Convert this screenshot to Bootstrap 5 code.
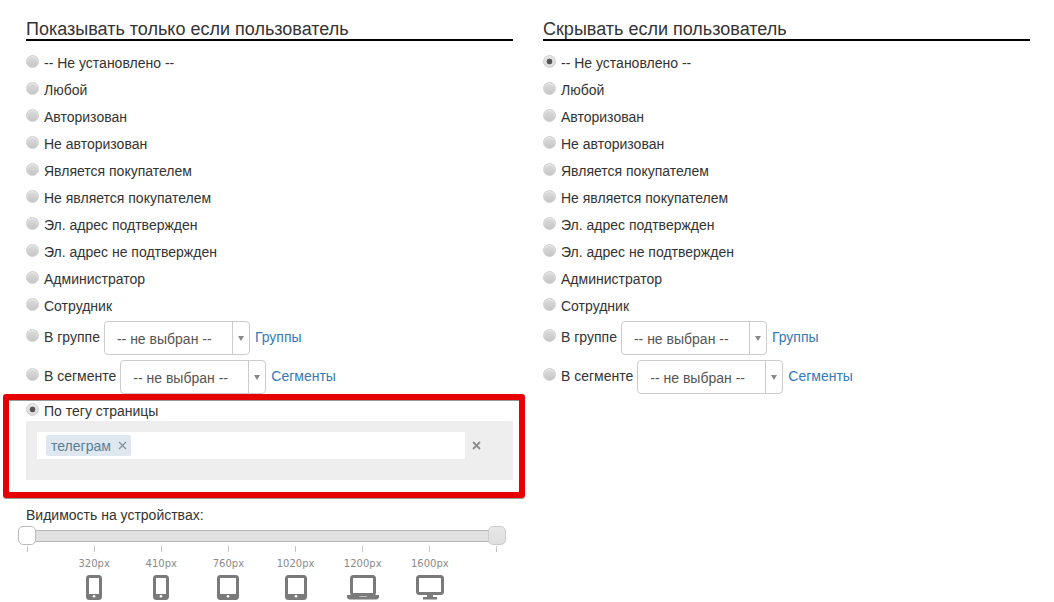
<!DOCTYPE html>
<html lang="ru"><head><meta charset="utf-8"><title>Видимость</title>
<link href="https://cdn.jsdelivr.net/npm/bootstrap@5.3.0/dist/css/bootstrap.min.css" rel="stylesheet">
<style>
html,body{height:602px;overflow:hidden}
body{font-family:"Liberation Sans",Arial,sans-serif;font-size:14px;color:#333;background:#fff;position:relative}
.page-wrap{padding:17px 24px 0 26px;gap:30px}
.pane{width:487px;flex:none}
.pane-title{font-size:18px;font-weight:400;line-height:22px;margin:0 0 7px;padding-top:1px;border-bottom:2px solid #000;color:#333;height:24px}
.opt{height:27px;display:flex;align-items:flex-start;padding-top:7px;line-height:16px;margin:0}
.rb{appearance:none;-webkit-appearance:none;width:13px;height:13px;border-radius:50%;border:1px solid #cfcfcf;background:linear-gradient(#dcdcdc,#c6c6c6);flex:none;margin:0 5px 0 0;box-shadow:inset 0 1px 1px #ececec}
.rb:checked{background:radial-gradient(circle,#555 0 2.6px,#e4e4e4 3.2px,#cfcfcf 100%)}
.opt-sel{height:39px;display:flex;align-items:flex-start;line-height:16px}
.opt-sel.first-sel{margin-top:3px}
.opt-sel.last-sel{height:36px}
.opt-sel .rb{margin-top:8px}
.opt-sel .cap{margin-top:8px}
.sel{display:flex;width:146px;height:34px;border:1px solid #ccc;border-radius:4px;margin:0 5px 0 4px;background:#fff;color:#555;font-size:14px}
.sel-txt{flex:1;padding:9px 0 0 12px;line-height:16px}
.sel-arrow{width:17px;border-left:1px solid #ccc;display:flex;align-items:center;justify-content:center}
.sel-arrow i{width:0;height:0;border:3px solid transparent;border-top:5px solid #888;border-bottom:0}
.lnk{color:#337ab7;text-decoration:none;margin-top:8px}
.tag-box{background:#eee;height:59px;padding:11px 0 0 11px;margin-top:-2px}
.tag-input{width:428px;height:27px;background:#fff;padding:3px 0 0 9px}
.tag{display:inline-flex;align-items:center;height:21px;background:#dfe8ef;color:#5b7d99;border-radius:2px;padding:0 4px 0 5px;gap:7px;line-height:20px}
.tag svg{display:block}
.clear-x{margin:9px 0 0 7px;display:block}
.vis-title{line-height:16px;margin:27px 0 0}
.track{position:relative;height:12px;margin:7px 16px 0 1px;background:#e1e1e1;border-top:1px solid #b9b9b9;border-bottom:1px solid #b9b9b9}
.knob{position:absolute;top:-5px;width:18px;height:19px;border:1px solid #bbb;border-radius:5px;background:#fff}
.knob-l{left:-9px}
.knob-r{right:-9px;background:linear-gradient(#e8e8e8,#dedede);border-color:#ccc}
.scale{margin:4px 16px 0 1px;display:flex;justify-content:space-between}
.stop{width:0;display:flex;flex-direction:column;align-items:center;white-space:nowrap}
.tick{width:1px;height:6px;background:#c4c4c4;flex:none}
.stop-label{font-family:"DejaVu Sans",sans-serif;font-size:10px;line-height:12px;color:#8a8a8a;margin-top:6px}
.stop svg{display:block;margin-top:5px;flex:none}
.red-frame{position:absolute;left:3px;top:394px;width:522px;height:104px;border:6px solid #e60000;border-radius:3px;pointer-events:none;box-shadow:inset 0 1px 0 #999,0 1px 0 #999}
</style></head>
<body>
<div class="d-flex page-wrap">
 <div class="pane">
  <h2 class="pane-title">Показывать только если пользователь</h2>
  <label class="opt"><input class="rb" type="radio" name="a">-- Не установлено --</label>
  <label class="opt"><input class="rb" type="radio" name="a">Любой</label>
  <label class="opt"><input class="rb" type="radio" name="a">Авторизован</label>
  <label class="opt"><input class="rb" type="radio" name="a">Не авторизован</label>
  <label class="opt"><input class="rb" type="radio" name="a">Является покупателем</label>
  <label class="opt"><input class="rb" type="radio" name="a">Не является покупателем</label>
  <label class="opt"><input class="rb" type="radio" name="a">Эл. адрес подтвержден</label>
  <label class="opt"><input class="rb" type="radio" name="a">Эл. адрес не подтвержден</label>
  <label class="opt"><input class="rb" type="radio" name="a">Администратор</label>
  <label class="opt"><input class="rb" type="radio" name="a">Сотрудник</label>
  <div class="opt-sel first-sel"><input class="rb" type="radio" name="a"><span class="cap">В группе</span><div class="sel"><span class="sel-txt">-- не выбран --</span><span class="sel-arrow"><i></i></span></div><a class="lnk" href="#">Группы</a></div>
  <div class="opt-sel last-sel"><input class="rb" type="radio" name="a"><span class="cap">В сегменте</span><div class="sel"><span class="sel-txt">-- не выбран --</span><span class="sel-arrow"><i></i></span></div><a class="lnk" href="#">Сегменты</a></div>
  <label class="opt"><input class="rb" type="radio" name="a" checked>По тегу страницы</label>
  <div class="tag-box d-flex">
   <div class="tag-input"><span class="tag">телеграм<svg width="9" height="9" viewBox="0 0 9 9"><path d="M1 1l7 7M8 1L1 8" stroke="#7f909e" stroke-width="1.200"/></svg></span></div>
   <svg class="clear-x" width="9" height="9" viewBox="0 0 9 9"><path d="M1 1l7 7M8 1L1 8" stroke="#8c8c8c" stroke-width="1.800"/></svg>
  </div>
  <p class="vis-title">Видимость на устройствах:</p>
  <div class="track"><span class="knob knob-l"></span><span class="knob knob-r"></span></div>
  <div class="scale">
   <div class="stop"><span class="tick"></span></div>
   <div class="stop"><span class="tick"></span><span class="stop-label">320px</span>
    <svg width="16" height="25" viewBox="0 0 16 25"><rect x="1.500" y="1.500" width="13" height="22" rx="2" fill="none" stroke="#7a7a7a" stroke-width="3"/><rect x="1" y="19" width="14" height="5" fill="#7a7a7a"/><circle cx="8" cy="21.300" r="1.300" fill="#fff"/></svg></div>
   <div class="stop"><span class="tick"></span><span class="stop-label">410px</span>
    <svg width="16" height="25" viewBox="0 0 16 25"><rect x="1.500" y="1.500" width="13" height="22" rx="2" fill="none" stroke="#7a7a7a" stroke-width="3"/><rect x="1" y="19" width="14" height="5" fill="#7a7a7a"/><circle cx="8" cy="21.300" r="1.300" fill="#fff"/></svg></div>
   <div class="stop"><span class="tick"></span><span class="stop-label">760px</span>
    <svg width="22" height="25" viewBox="0 0 22 25"><rect x="1.500" y="1.500" width="19" height="22" rx="2" fill="none" stroke="#7a7a7a" stroke-width="3"/><rect x="1" y="19" width="20" height="5" fill="#7a7a7a"/><circle cx="11" cy="21.300" r="1.300" fill="#fff"/></svg></div>
   <div class="stop"><span class="tick"></span><span class="stop-label">1020px</span>
    <svg width="22" height="25" viewBox="0 0 22 25"><rect x="1.500" y="1.500" width="19" height="22" rx="2" fill="none" stroke="#7a7a7a" stroke-width="3"/><rect x="1" y="19" width="20" height="5" fill="#7a7a7a"/><circle cx="11" cy="21.300" r="1.300" fill="#fff"/></svg></div>
   <div class="stop"><span class="tick"></span><span class="stop-label">1200px</span>
    <svg width="32" height="25" viewBox="0 0 32 25"><rect x="4.500" y="1.500" width="23" height="18" rx="2" fill="none" stroke="#7a7a7a" stroke-width="3"/><path d="M0 20h11l1.500 1.500h7L21 20h11v1.500a3 3 0 0 1-3 3H3a3 3 0 0 1-3-3z" fill="#7a7a7a"/></svg></div>
   <div class="stop"><span class="tick"></span><span class="stop-label">1600px</span>
    <svg width="28" height="25" viewBox="0 0 28 25"><rect x="1.500" y="1.500" width="25" height="17" rx="2" fill="none" stroke="#7a7a7a" stroke-width="3"/><path d="M11 19h6v3h4v2.500H7V22h4z" fill="#7a7a7a"/></svg></div>
   <div class="stop"><span class="tick"></span></div>
  </div>
 </div>
 <div class="pane">
  <h2 class="pane-title">Скрывать если пользователь</h2>
  <label class="opt"><input class="rb" type="radio" name="b" checked>-- Не установлено --</label>
  <label class="opt"><input class="rb" type="radio" name="b">Любой</label>
  <label class="opt"><input class="rb" type="radio" name="b">Авторизован</label>
  <label class="opt"><input class="rb" type="radio" name="b">Не авторизован</label>
  <label class="opt"><input class="rb" type="radio" name="b">Является покупателем</label>
  <label class="opt"><input class="rb" type="radio" name="b">Не является покупателем</label>
  <label class="opt"><input class="rb" type="radio" name="b">Эл. адрес подтвержден</label>
  <label class="opt"><input class="rb" type="radio" name="b">Эл. адрес не подтвержден</label>
  <label class="opt"><input class="rb" type="radio" name="b">Администратор</label>
  <label class="opt"><input class="rb" type="radio" name="b">Сотрудник</label>
  <div class="opt-sel first-sel"><input class="rb" type="radio" name="b"><span class="cap">В группе</span><div class="sel"><span class="sel-txt">-- не выбран --</span><span class="sel-arrow"><i></i></span></div><a class="lnk" href="#">Группы</a></div>
  <div class="opt-sel last-sel"><input class="rb" type="radio" name="b"><span class="cap">В сегменте</span><div class="sel"><span class="sel-txt">-- не выбран --</span><span class="sel-arrow"><i></i></span></div><a class="lnk" href="#">Сегменты</a></div>
 </div>
</div>
<div class="red-frame"></div>
<script src="https://cdn.jsdelivr.net/npm/bootstrap@5.3.0/dist/js/bootstrap.bundle.min.js"></script>
</body></html>
